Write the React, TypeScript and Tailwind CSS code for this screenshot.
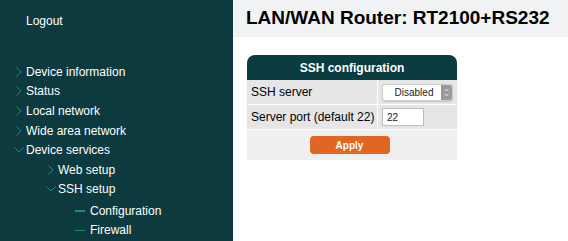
import React from 'react';

const font = { fontFamily: '"Liberation Sans", Arial, sans-serif' };

function Chevron({ open }: { open?: boolean }) {
  return open ? (
    <svg className="h-[6px] w-[10px]" viewBox="0 0 10 6" fill="none" stroke="#1e8a7e" strokeWidth="1">
      <path d="M0.5 0.5 L5 5 L9.5 0.5" />
    </svg>
  ) : (
    <svg className="h-[10px] w-[6px]" viewBox="0 0 6 10" fill="none" stroke="#1e8a7e" strokeWidth="1">
      <path d="M0.5 0.5 L5 5 L0.5 9.5" />
    </svg>
  );
}

type Item = { label: string; level: 0 | 1 | 2; open?: boolean };

const items: Item[] = [
  { label: 'Device information', level: 0 },
  { label: 'Status', level: 0 },
  { label: 'Local network', level: 0 },
  { label: 'Wide area network', level: 0 },
  { label: 'Device services', level: 0, open: true },
  { label: 'Web setup', level: 1 },
  { label: 'SSH setup', level: 1, open: true },
  { label: 'Configuration', level: 2 },
  { label: 'Firewall', level: 2 },
];

function NavRow({ item }: { item: Item }) {
  if (item.level === 2) {
    return (
      <div className="flex h-[19.5px] items-center pl-[75px]">
        <span className="mr-[5px] block h-[1.5px] w-[10px] bg-[#1e8a7e]" />
        <span className="text-[12px] text-white">{item.label}</span>
      </div>
    );
  }
  const pad = item.level === 0 ? 'pl-[12px]' : 'pl-[44px]';
  return (
    <div className={`flex h-[19.6px] items-center ${pad}`}>
      <span className="flex w-[14px] items-center justify-center">
        <Chevron open={item.open} />
      </span>
      <span className="text-[12px] text-white">{item.label}</span>
    </div>
  );
}

export default function App() {
  return (
    <div className="flex h-[241px] w-[568px] overflow-hidden bg-white" style={font}>
      <aside className="w-[233px] shrink-0 bg-[#0c3a3e]">
        <div className="pl-[26px] pt-[12px] text-[12px] text-white">Logout</div>
        <nav className="mt-[32px]">
          {items.slice(0, 7).map((it) => (
            <NavRow key={it.label} item={it} />
          ))}
          <div className="mt-[2px]">
            {items.slice(7).map((it) => (
              <NavRow key={it.label} item={it} />
            ))}
          </div>
        </nav>
      </aside>

      <main className="flex-1">
        <header className="flex h-[37px] items-center bg-[#f1f2f4] pl-[13px]">
          <h1 className="text-[19px] font-bold text-black">LAN/WAN Router: RT2100+RS232</h1>
        </header>

        <div className="ml-[14px] mt-[18px] w-[210px]">
          <div className="flex h-[25px] items-center justify-center rounded-t-[8px] bg-[#0b3c41] text-[12px] font-bold text-white">
            SSH configuration
          </div>
          <div className="flex h-[25px] border-b border-white bg-[#e6e6e6]">
            <div className="flex w-[131px] items-center border-r border-white pl-[4px] text-[12px] text-black">
              SSH server
            </div>
            <div className="flex flex-1 items-center pl-[4px]">
              <div className="flex h-[17px] w-[71px] items-center justify-between rounded-[3px] border border-[#cfcfcf] bg-white pl-[4px] shadow-[0_0.5px_1px_rgba(0,0,0,0.15)]">
                <span className="flex-1 text-center text-[10px] text-[#222]">Disabled</span>
                <span className="flex h-[15px] w-[11px] items-center justify-center rounded-r-[2px] bg-[#9a9a9a]">
                  <svg className="h-[9px] w-[5px]" viewBox="0 0 5 9" fill="none" stroke="white" strokeWidth="0.9">
                    <path d="M0.7 3 L2.5 1.2 L4.3 3 M0.7 6 L2.5 7.8 L4.3 6" />
                  </svg>
                </span>
              </div>
            </div>
          </div>
          <div className="flex h-[25px] border-b border-white bg-[#e6e6e6]">
            <div className="flex w-[131px] items-center border-r border-white pl-[4px] text-[12px] text-black">
              Server port (default 22)
            </div>
            <div className="flex flex-1 items-center pl-[4px]">
              <div className="flex h-[18px] w-[42px] items-center border border-[#bdbdbd] bg-white pl-[4px] text-[10px] text-[#222]">
                22
              </div>
            </div>
          </div>
          <div className="flex h-[30px] items-center justify-center bg-[#efefef]">
            <button className="ml-[-5px] h-[18px] w-[80px] rounded-[4px] bg-[#e16623] text-[10px] font-bold text-white">
              Apply
            </button>
          </div>
        </div>
      </main>
    </div>
  );
}
